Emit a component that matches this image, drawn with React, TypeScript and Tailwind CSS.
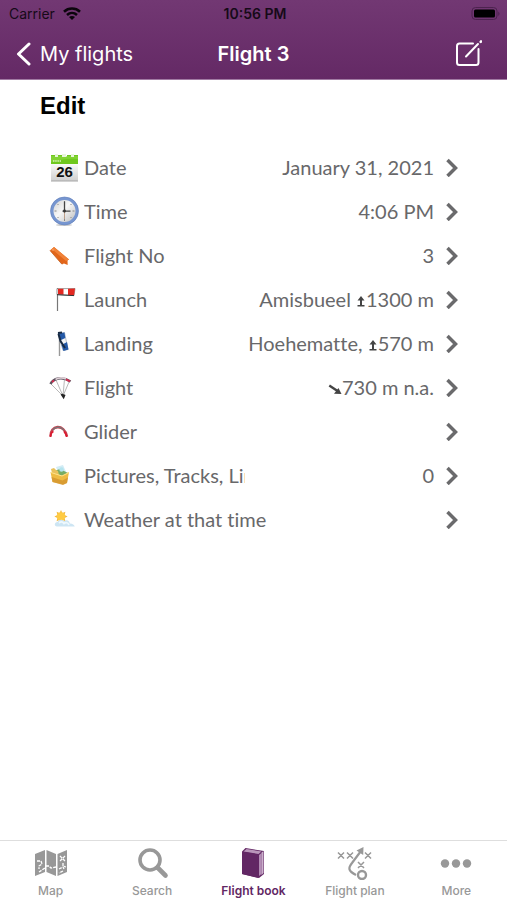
import type { ReactNode } from "react";

const CalendarIcon = () => (
  <svg viewBox="0 0 30 30" className="h-full w-full">
    <defs>
      <linearGradient id="page" x1="0" y1="0" x2="0" y2="1">
        <stop offset="0" stopColor="#ffffff" />
        <stop offset="1" stopColor="#cfcfcf" />
      </linearGradient>
    </defs>
    <path d="M2 10h27v18a1 1 0 0 1-1 1H3a1 1 0 0 1-1-1z" fill="url(#page)" />
    <path d="M2 3h4v2h3V3h4v2h5V3h4v2h3V3h4v9H2z" fill="#6fc81e" />
    <path d="M2 4h27v3C18 6 10 8 2 10z" fill="#8fdb43" opacity=".6" />
    <path d="M6 2h3v3H6zM13 2h4v3h-4zM22 2h3v3h-3z" fill="#e9f5dc" />
    <path d="M4 9h8" stroke="#d8f5b8" strokeWidth="1.500" strokeDasharray="1.500 .7" />
    <path d="M2 29h27" stroke="#a5a5a5" strokeWidth="1" />
    <text x="15.500" y="25" textAnchor="middle" fontFamily="Liberation Sans, sans-serif" fontWeight="700" fontSize="15" fill="#111">26</text>
  </svg>
);

const ClockIcon = () => (
  <svg viewBox="0 0 30 30" className="h-full w-full">
    <defs>
      <linearGradient id="dial" x1="0" y1="0" x2="1" y2="1">
        <stop offset="0" stopColor="#cbcbcb" />
        <stop offset=".45" stopColor="#f7f7f7" />
        <stop offset="1" stopColor="#b7b7b7" />
      </linearGradient>
    </defs>
    <ellipse cx="15" cy="29" rx="8" ry="1" fill="#ccc" />
    <circle cx="15.500" cy="15" r="12.500" fill="url(#dial)" stroke="#7796d0" strokeWidth="3" />
    <circle cx="15.500" cy="15" r="14" fill="none" stroke="#5f7db8" strokeWidth=".6" />
    <path d="M15.500 5v2M15.500 23v2M5.500 15h2M23.500 15h2M8.500 8l1 1M22.500 8l-1 1M8.500 22l1-1M22.500 22l-1-1" stroke="#888" strokeWidth="1" />
    <path d="M15.500 5.500V17M13.500 15.200H21.500" stroke="#444" strokeWidth="1.300" />
    <path d="M15.500 14v9" stroke="#b08b72" strokeWidth=".8" />
    <circle cx="15.500" cy="15" r="1.400" fill="#333" />
  </svg>
);

const TagIcon = () => (
  <svg viewBox="0 0 30 30" className="h-full w-full">
    <path d="M1 10.500 5 7 20 19.500l-1.500 1 .2 4.500-3.700-1.500-2 .8z" fill="#e2661a" />
    <path d="m1 10.500 4-3.500 15 12.500-3 1.500L4 10z" fill="#f08238" />
    <path d="m1 10.500 12 13.800" stroke="#c05c1c" strokeWidth=".8" />
    <circle cx="4" cy="10" r=".6" fill="#fbe0cc" />
  </svg>
);

const LaunchIcon = () => (
  <svg viewBox="0 0 30 30" className="h-full w-full">
    <path d="M8.500 4v23" stroke="#777" strokeWidth="1.200" />
    <path d="M8 4.700 26 4.500l-1 7-17-1z" fill="#fff" stroke="#777" strokeWidth=".7" />
    <path d="M9 4.700h5.500v6L9 10.300zM19 4.700l7-.2-1 7-6-.5z" fill="#e32922" />
    <path d="m8 10.700 17 .9" stroke="#333" strokeWidth="1" />
  </svg>
);

const LandingIcon = () => (
  <svg viewBox="0 0 30 30" className="h-full w-full">
    <path d="M10.500 6v22" stroke="#999" strokeWidth="1.400" />
    <path d="m9 5.500 6.500-1 3.500 17-5 1z" fill="#f2f4f7" stroke="#8a97aa" strokeWidth=".6" />
    <path d="m9 5.500 6.500-1 .8 5.500-5.300 2.500zM12.500 17l5.500-3 1.500 7.500-5 1.500z" fill="#2459a7" />
    <path d="m9 5 4-.5M9.500 6l2 7 4.500 7" fill="none" stroke="#182a42" strokeWidth="2" />
  </svg>
);

const ParagliderIcon = () => (
  <svg viewBox="0 0 30 30" className="h-full w-full">
    <path d="m2 12 12 12 6-14M7 8l7 16 1.500-17" stroke="#999" strokeWidth=".7" fill="none" />
    <path d="M1.500 12C4 6.500 13 3.500 21.500 9.500" stroke="#5e5460" strokeWidth="2.500" fill="none" />
    <path d="M6.500 7.500C10 5.500 13.500 5.500 17 7" stroke="#dfd0d6" strokeWidth="1.800" fill="none" />
    <path d="m3 10 2-1.500M17 7.300l4 2" stroke="#d52d50" strokeWidth="2" />
    <path d="m12.500 22 2 3 1-2.500" stroke="#222" strokeWidth="2.200" fill="none" />
  </svg>
);

const GliderIcon = () => (
  <svg viewBox="0 0 30 30" className="h-full w-full">
    <path d="M1.500 20.500C1 9 15 7 18 20.500" stroke="#c64352" strokeWidth="2.600" fill="none" />
    <path d="M3.500 14C7 10 12 10 15 14.500" stroke="#777" strokeWidth="1.200" fill="none" />
    <path d="M1.500 21c-.3-4 2-5 3-5.500M15 15.500c1.500 1.500 2.500 3.500 2.800 5.500" stroke="#dc192e" strokeWidth="1.600" fill="none" />
  </svg>
);

const FolderIcon = () => (
  <svg viewBox="0 0 30 30" className="h-full w-full">
    <path d="m7 7 7-2 4 9-8 1z" fill="#d2ecf5" />
    <path d="m5 11 6-2 8 4-1 6-12-2z" fill="#78ad63" />
    <path d="m2 9 3-1 2 2 2 1 1 4-7-2z" fill="#e8c15c" />
    <path d="M1.500 12 13 15.500l7-3.500-2 11-4 1.500L3.500 22z" fill="#eebb42" />
    <path d="m2.500 17 11 3.500 5.500-3-1 5.500-4 2L3.500 22z" fill="#d2912d" opacity=".75" />
    <path d="m2 12.500 11 3.500 7-3.500" fill="none" stroke="#ffe38d" strokeWidth="1" />
    <circle cx="12.500" cy="9.500" r="2.200" fill="#b5e4ee" />
  </svg>
);

const WeatherIcon = () => (
  <svg viewBox="0 0 30 30" className="h-full w-full">
    <path d="m12 6 1.400 3 3-1.200-.8 3.200 3 1.500-3 1.500.8 3.200-3-1.200L12 19l-1.400-3-3 1.200.8-3.200-3-1.500 3-1.500-.8-3.200 3 1.200z" fill="#f3ba41" />
    <circle cx="12" cy="12.500" r="4.200" fill="#ffcb43" />
    <path d="M8 22.500c-3-.5-3-4 .5-4.500 1.500-3 5-3 6.500-.8 3-2 5.500-.6 5.800 2.300 3 0 4.500 1.500 5 3z" fill="#cde5f3" />
    <path d="M10 19c2-2 4-1 5 .5 2-1.500 4-1 5 1.500" fill="none" stroke="#eef8fd" strokeWidth="1.800" />
  </svg>
);

const Chevron = () => (
  <svg viewBox="0 0 14 20" className="h-5 w-[14px] shrink-0" fill="none" stroke="#6a6a6c" strokeWidth="3.500">
    <path d="m1.500 3 8 8-8 8" />
  </svg>
);

const MapIcon = () => (
  <svg viewBox="0 0 34 34" className="h-[34px] w-[34px]">
    <path d="m1 8 10-4v22L1 30zM12.500 4 22 8v22l-9.500-4zM23.500 8 33 4v22l-9.500 4z" fill="#989898" />
    <path d="M3 15h4l1 3-3 2v3M5 26l6-4M12 20l3 0 2 2 5-1M25 23l4-2 1 2M26 10l5 5M31 10l-5 5M29 17v3l3 1M29 25l-4 2" stroke="#fff" strokeWidth="1.300" strokeDasharray="3 1" fill="none" />
  </svg>
);

const SearchIcon = () => (
  <svg viewBox="0 0 34 34" className="h-[34px] w-[34px]" fill="none" stroke="#989898">
    <circle cx="15" cy="14" r="10" strokeWidth="3.600" />
    <path d="m22.500 21.500 8 8" strokeWidth="4.600" strokeLinecap="round" />
  </svg>
);

const BookIcon = () => (
  <svg viewBox="0 0 34 34" className="h-[34px] w-[34px]">
    <path d="m6 5.500 3.500-3.500L28 5v23l-5 4-17-4z" fill="#622764" />
    <path d="M7.500 5.500 10.500 3 25.500 5.500 22.500 8z" fill="#b996ba" />
    <path d="m23 9 2.500-2v21L23 30z" fill="#b28cb4" />
    <path d="m25.500 6.500 2-1.500v22l-2 2z" fill="#cbb0cc" />
    <path d="M6 5.500v22.500l16.500 4V8.500z" fill="#622764" />
  </svg>
);

const PlanIcon = () => (
  <svg viewBox="0 0 40 34" className="h-[34px] w-10" fill="none" stroke="#989898">
    <path d="m3 6.500 6 6M9 6.500l-6 6M12 6.500l6 6M18 6.500l-6 6M30 6.500l6 6M36 6.500l-6 6M23 16l6 6M29 16l-6 6" strokeWidth="1.500" />
    <path d="M21 29c-8-4-8-7-4-12l9-12" strokeWidth="2.200" />
    <path d="m21.500 4.500 7-3.500-.3 8z" fill="#989898" stroke="none" />
    <circle cx="27" cy="30" r="4" strokeWidth="2.400" transform="translate(0 -1)" />
  </svg>
);

const MoreIcon = () => (
  <svg viewBox="0 0 34 34" className="h-[34px] w-[34px]" fill="#989898">
    <circle cx="6" cy="17.500" r="4.200" />
    <circle cx="17" cy="17.500" r="4.200" />
    <circle cx="28" cy="17.500" r="4.200" />
  </svg>
);

const RiseIcon = () => (
  <svg viewBox="0 0 10 14" className="inline-block h-[14px] w-[10px] align-[-2px]" role="img" aria-label="elevation">
    <path d="M5 1 8.500 5.500H6V10h2.500v1.600h-7V10H4V5.500H1.500z" fill="#444" />
  </svg>
);

const DescentIcon = () => (
  <svg viewBox="0 0 14 14" className="inline-block h-[14px] w-[14px] align-[-2px]" role="img" aria-label="descent">
    <path d="m1.300 2.500 9 6" stroke="#444" strokeWidth="2.400" />
    <path d="m13.500 11-7.500-.3 4.500-5.700z" fill="#444" />
  </svg>
);

type Row = { label: string; value?: ReactNode; icon: ReactNode };

const rows: Row[] = [
  { label: "Date", value: "January 31, 2021", icon: <CalendarIcon /> },
  { label: "Time", value: "4:06 PM", icon: <ClockIcon /> },
  { label: "Flight No", value: "3", icon: <TagIcon /> },
  { label: "Launch", value: <>Amisbueel <RiseIcon />1300 m</>, icon: <LaunchIcon /> },
  { label: "Landing", value: <>Hoehematte, <RiseIcon />570 m</>, icon: <LandingIcon /> },
  { label: "Flight", value: <><DescentIcon />730 m n.a.</>, icon: <ParagliderIcon /> },
  { label: "Glider", icon: <GliderIcon /> },
  { label: "Pictures, Tracks, Links", value: "0", icon: <FolderIcon /> },
  { label: "Weather at that time", icon: <WeatherIcon /> },
];

const tabs = [
  { label: "Map", icon: <MapIcon /> },
  { label: "Search", icon: <SearchIcon /> },
  { label: "Flight book", icon: <BookIcon />, active: true },
  { label: "Flight plan", icon: <PlanIcon /> },
  { label: "More", icon: <MoreIcon /> },
];

export default function App() {
  return (
    <div className="flex min-h-screen flex-col bg-white font-['Inter',sans-serif]">
      <header className="border-b border-[#a17ba3] bg-linear-to-b from-[#723873] to-[#642965]">
        <div className="grid h-7 grid-cols-3 items-center pr-[6px] pl-[9px] text-sm text-[#160a18]">
          <div className="flex items-center gap-2">
            <span>Carrier</span>
            <svg viewBox="0 0 18 14" className="h-[14px] w-[18px]" fill="none" stroke="#0b050c" strokeWidth="2.600">
              <path d="M1 4.700c4.500-4.200 11.500-4.200 16 0M4 8c3-2.700 7-2.700 10 0" />
              <path d="m9 13-3-3c1.700-1.500 4.300-1.500 6 0z" fill="#0b050c" stroke="none" />
            </svg>
          </div>
          <span className="text-center font-semibold">10:56 PM</span>
          <svg viewBox="0 0 30 14" className="h-[14px] w-[30px] justify-self-end">
            <rect x="1" y=".500" width="25" height="12" rx="3.500" fill="none" stroke="#4d234f" />
            <rect x="3" y="2.500" width="21" height="8" rx="1.500" fill="#000" />
            <path d="M27.300 4.500c1.600 1 1.600 3.500 0 4.500z" fill="#4d234f" />
          </svg>
        </div>
        <div className="grid h-[51px] grid-cols-3 items-center px-4 text-xl text-white">
          <button className="flex items-center gap-[9px] whitespace-nowrap">
            <svg viewBox="0 0 15 24" className="h-6 w-[15px]" fill="none" stroke="#fff" strokeWidth="3" strokeLinecap="round" strokeLinejoin="round">
              <path d="M13 2 2.500 12 13 22" />
            </svg>
            My flights
          </button>
          <h1 className="text-center font-semibold">Flight 3</h1>
          <button aria-label="Edit flight" className="mr-[9px] justify-self-end">
            <svg viewBox="0 0 28 28" className="block h-7 w-7" fill="none" stroke="#fff" strokeWidth="2" strokeLinecap="round">
              <path d="M19 3.500H5.500A2.500 2.500 0 0 0 3 6v16.500A2.500 2.500 0 0 0 5.500 25H22a2.500 2.500 0 0 0 2.500-2.500V9M12 16.500 24 4" />
              <path d="m26.700 1.800.3-.3" strokeWidth="2.600" />
            </svg>
          </button>
        </div>
      </header>

      <main className="grow">
        <h2 className="pt-[10px] pl-10 font-['Liberation_Sans',Arial,sans-serif] text-2xl font-bold text-black">Edit</h2>
        <ul className="mt-[23px] pr-[47px] pl-[49px]">
          {rows.map((row) => (
            <li key={row.label}>
              <button className="flex h-11 w-full items-center text-left font-['Lato',sans-serif] text-xl text-[#68686a] [font-variant-ligatures:none]">
                <span className="mr-[5px] h-[30px] w-[30px] shrink-0">{row.icon}</span>
                <span className={row.value ? "w-[161px] overflow-hidden whitespace-nowrap" : "whitespace-nowrap"}>{row.label}</span>
                <span className="mr-3 grow text-right whitespace-nowrap">{row.value}</span>
                <Chevron />
              </button>
            </li>
          ))}
        </ul>
      </main>

      <nav className="grid h-[60px] grid-cols-5 border-t border-[#dedede] bg-white">
        {tabs.map((tab) => (
          <button
            key={tab.label}
            aria-current={tab.active ? "page" : undefined}
            className={
              tab.active
                ? "flex flex-col items-center pt-[5px] text-xs font-semibold text-[#622764]"
                : "flex flex-col items-center pt-[5px] text-xs font-medium text-[#989898]"
            }
          >
            {tab.icon}
            <span className="mt-[3px]">{tab.label}</span>
          </button>
        ))}
      </nav>
    </div>
  );
}
